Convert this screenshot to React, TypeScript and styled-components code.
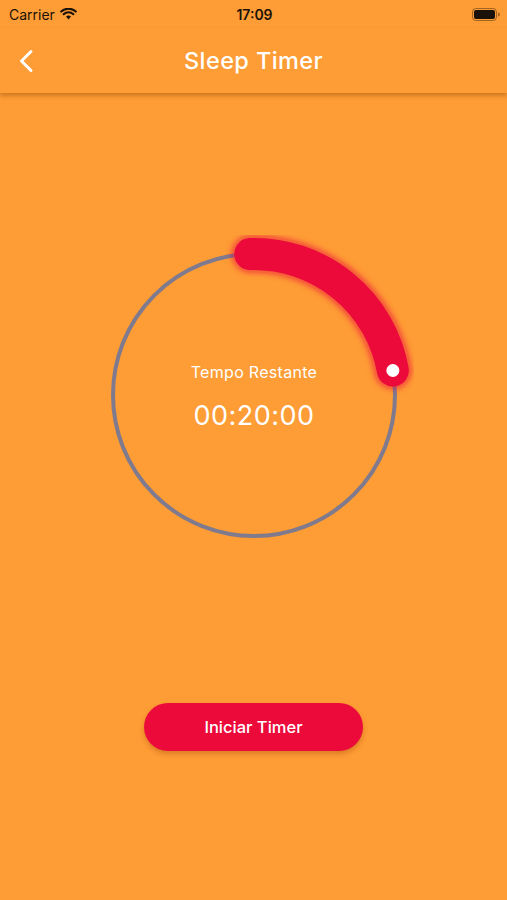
import React from 'react'
import styled, { createGlobalStyle } from 'styled-components'

const orange = '#fe9c35'
const red = '#ec0a3b'

const GlobalStyle = createGlobalStyle`
  html, body {
    margin: 0;
    padding: 0;
    background: ${orange};
  }
  * {
    box-sizing: border-box;
  }
`

const Page = styled.div`
  width: 507px;
  height: 900px;
  display: flex;
  flex-direction: column;
  background: ${orange};
  font-family: Inter, 'Noto Sans', sans-serif;
  color: #fff;
  overflow: hidden;
`

const StatusBar = styled.div`
  height: 28px;
  display: grid;
  grid-template-columns: 1fr auto 1fr;
  align-items: center;
  padding: 0 7px 0 9px;
  color: #1a1208;
  font-size: 14px;
`

const Carrier = styled.div`
  display: flex;
  align-items: center;
  gap: 5px;
`

const Clock = styled.div`
  font-weight: 600;
`

const Battery = styled.div`
  justify-self: end;
  display: flex;
  align-items: center;
`

const NavBar = styled.header`
  height: 65px;
  display: grid;
  grid-template-columns: 60px 1fr 60px;
  align-items: center;
  box-shadow: 0 3px 4px rgba(120, 60, 0, 0.35);
  position: relative;
  z-index: 1;
`

const BackButton = styled.div`
  display: flex;
  align-items: center;
  padding-left: 18px;
`

const Title = styled.h1`
  margin: 0;
  text-align: center;
  font-size: 23.5px;
  font-weight: 500;
  letter-spacing: 0.4px;
`

const Content = styled.main`
  flex: 1;
  display: flex;
  flex-direction: column;
  align-items: center;
`

const Dial = styled.div`
  position: relative;
  width: 320px;
  height: 320px;
  margin-top: 142px;
  margin-left: 1px;
`

const DialLabel = styled.div`
  position: absolute;
  inset: 0;
  display: flex;
  flex-direction: column;
  align-items: center;
  justify-content: center;
  gap: 17px;
  padding-top: 4px;
`

const Caption = styled.div`
  font-size: 16px;
  font-weight: 400;
  letter-spacing: 0.3px;
`

const Time = styled.div`
  font-size: 27px;
  font-weight: 400;
  letter-spacing: 0.5px;
`

const StartButton = styled.button`
  margin-top: 148px;
  width: 219px;
  height: 48px;
  border: none;
  border-radius: 24px;
  background: ${red};
  color: #fff;
  font-family: inherit;
  font-size: 16.5px;
  font-weight: 500;
  box-shadow: 0 3px 5px rgba(140, 50, 0, 0.3);
  cursor: pointer;
`

const polar = (cx: number, cy: number, r: number, deg: number) => {
  const a = (deg * Math.PI) / 180
  return [cx + r * Math.cos(a), cy + r * Math.sin(a)]
}

const ProgressRing = ({ from, to }: { from: number; to: number }) => {
  const c = 160
  const r = 141
  const [x1, y1] = polar(c, c, r, from)
  const [x2, y2] = polar(c, c, r, to)
  const large = to - from > 180 ? 1 : 0
  const d = `M ${x1} ${y1} A ${r} ${r} 0 ${large} 1 ${x2} ${y2}`
  return (
    <svg width="320" height="320" viewBox="0 0 320 320">
      <defs>
        <filter id="glow" x="-30%" y="-30%" width="160%" height="160%">
          <feGaussianBlur stdDeviation="3" />
        </filter>
      </defs>
      <circle cx={c} cy={c} r={r} fill="none" stroke="#7f7a8e" strokeWidth="4" />
      <path d={d} fill="none" stroke={red} strokeOpacity="0.7" strokeWidth="36" strokeLinecap="round" filter="url(#glow)" />
      <path d={d} fill="none" stroke={red} strokeWidth="32" strokeLinecap="round" />
      <circle cx={x2} cy={y2} r="6.5" fill="#fff" />
    </svg>
  )
}

const App = () => (
  <Page>
    <GlobalStyle />
    <StatusBar>
      <Carrier>
        Carrier
        <svg width="17" height="12" viewBox="0 0 17 12">
          <path d="M8.5 11.5 L6 8.6 A3.6 3.6 0 0 1 11 8.6 Z" fill="#1a1208" />
          <path d="M3.6 6.2 A7 7 0 0 1 13.4 6.2" fill="none" stroke="#1a1208" strokeWidth="2" strokeLinecap="round" />
          <path d="M1.2 3.6 A10.6 10.6 0 0 1 15.8 3.6" fill="none" stroke="#1a1208" strokeWidth="2" strokeLinecap="round" />
        </svg>
      </Carrier>
      <Clock>17:09</Clock>
      <Battery>
        <svg width="28" height="13" viewBox="0 0 28 13">
          <rect x="0.5" y="0.5" width="24" height="12" rx="3.5" fill="none" stroke="#1a1208" strokeOpacity="0.4" />
          <rect x="2" y="2" width="21" height="9" rx="2" fill="#1a1208" />
          <path d="M26 4.5 a1.8 1.8 0 0 1 0 4 Z" fill="#1a1208" fillOpacity="0.4" />
        </svg>
      </Battery>
    </StatusBar>
    <NavBar>
      <BackButton>
        <svg width="16" height="24" viewBox="0 0 16 24">
          <path d="M13 2.5 L3.5 12 L13 21.5" fill="none" stroke="#fff" strokeWidth="3" strokeLinecap="round" strokeLinejoin="round" />
        </svg>
      </BackButton>
      <Title>Sleep Timer</Title>
      <div />
    </NavBar>
    <Content>
      <Dial>
        <ProgressRing from={-91.5} to={-10} />
        <DialLabel>
          <Caption>Tempo Restante</Caption>
          <Time>00:20:00</Time>
        </DialLabel>
      </Dial>
      <StartButton>Iniciar Timer</StartButton>
    </Content>
  </Page>
)

export default App
